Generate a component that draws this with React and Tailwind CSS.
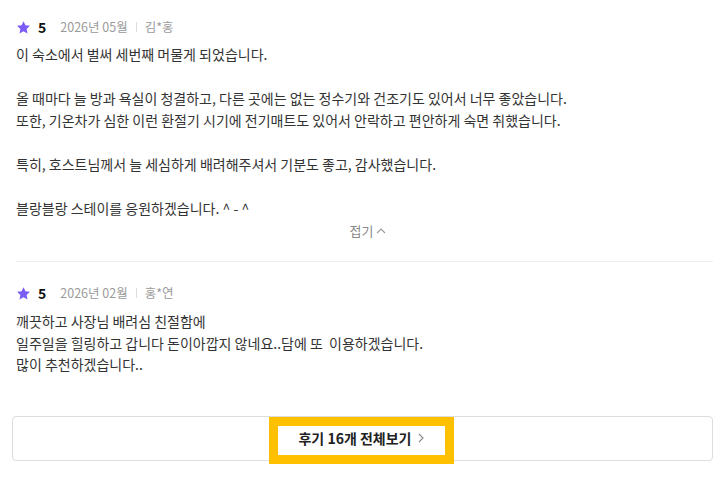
const reviews = [
  {
    rating: 5,
    date: "2026년 05월",
    name: "김*홍",
    body: "이 숙소에서 벌써 세번째 머물게 되었습니다.\n\n올 때마다 늘 방과 욕실이 청결하고, 다른 곳에는 없는 정수기와 건조기도 있어서 너무 좋았습니다.\n또한, 기온차가 심한 이런 환절기 시기에 전기매트도 있어서 안락하고 편안하게 숙면 취했습니다.\n\n특히, 호스트님께서 늘 세심하게 배려해주셔서 기분도 좋고, 감사했습니다.\n\n블랑블랑 스테이를 응원하겠습니다. ^ - ^",
  },
  {
    rating: 5,
    date: "2026년 02월",
    name: "홍*연",
    body: "깨끗하고 사장님 배려심 친절함에\n일주일을 힐링하고 갑니다 돈이아깝지 않네요..담에 또  이용하겠습니다.\n많이 추천하겠습니다..",
  },
];

function Star() {
  return (
    <svg viewBox="0 0 24 24" className="h-[15px] w-[15px]" fill="#7b5cf5">
      <path d="M12 1.8l3.1 6.6 7.2.9-5.3 5 1.4 7.1L12 17.9l-6.4 3.5 1.4-7.1-5.3-5 7.2-.9z" />
    </svg>
  );
}

function ReviewHeader({ rating, date, name }) {
  return (
    <div className="flex h-5 items-center">
      <Star />
      <span className="ml-[7px] text-[14px] font-bold text-[#111]">{rating}</span>
      <span className="ml-[14px] text-[12.5px] text-[#9a9a9a]">{date}</span>
      <span className="mx-[8px] h-[10px] w-px bg-[#dcdcdc]" />
      <span className="text-[12.5px] text-[#9a9a9a]">{name}</span>
    </div>
  );
}

export default function App() {
  return (
    <div
      className="h-[480px] w-[720px] overflow-hidden bg-white pl-4 pr-[7px] text-[#333]"
      style={{ fontFamily: '"Noto Sans CJK KR", "Noto Sans", sans-serif' }}
    >
      {/* first review */}
      <div className="border-b border-[#eeeeee] pb-[20px] pt-[17px]">
        <ReviewHeader {...reviews[0]} />
        <p className="mt-[6px] whitespace-pre-wrap text-[14px] leading-[22px]">
          {reviews[0].body}
        </p>
        <div className="mt-[2px] flex h-5 items-center justify-center pl-[8px] text-[13px] text-[#888]">
          접기
          <svg viewBox="0 0 12 12" className="ml-[2px] h-[12px] w-[12px]" fill="none" stroke="#999" strokeWidth="1.1">
            <path d="M2 8l4-4 4 4" />
          </svg>
        </div>
      </div>

      {/* second review */}
      <div className="pt-[21px]">
        <ReviewHeader {...reviews[1]} />
        <p className="mt-[8px] whitespace-pre-wrap text-[14px] leading-[21.5px]">
          {reviews[1].body}
        </p>
      </div>

      <div className="relative -ml-[4px] mt-[40px] flex h-[45px] items-center justify-center rounded-[4px] border border-[#dddddd]">
        <div className="absolute left-1/2 top-0 h-[47px] w-[185px] -translate-x-[94px] border-[9px] border-[#ffc000]" />
        <span className="relative flex items-center text-[14px] font-semibold text-[#222]">
          후기 16개 전체보기
          <svg viewBox="0 0 12 12" className="ml-[3px] h-[12px] w-[12px]" fill="none" stroke="#888" strokeWidth="1.1">
            <path d="M4 2l4 4-4 4" />
          </svg>
        </span>
      </div>
    </div>
  );
}
